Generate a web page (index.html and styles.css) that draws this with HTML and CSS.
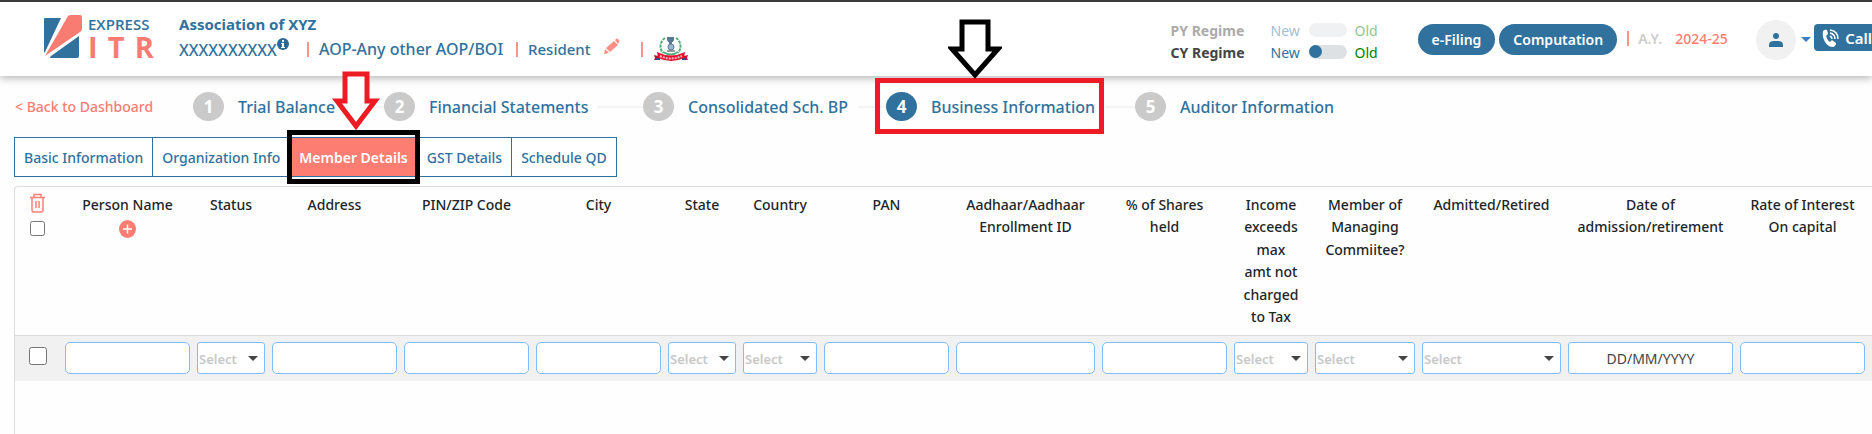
FILE: index.html
```html
<!DOCTYPE html>
<html lang="en">
<head>
  <meta charset="UTF-8" />
  <meta name="viewport" content="width=device-width, initial-scale=1.0" />
  <title>Express ITR | Member Details</title>
  <link rel="stylesheet" href="styles.css">
</head>
<body>
  <!-- Header -->
  <header class="header">
    <a href="#" class="logo">
      <svg width="39" height="44" viewBox="0 0 39 44">
        <path d="M2 3H18L2 37Q1 39 1 36V4Q1 3 2 3Z" fill="#31719d" />
        <path d="M25 1Q26 0 28 0H37Q39 0 39 2V14Q39 16 37 17L2 41Z" fill="#f97c72" />
        <path d="M36 21V41Q36 43 34 43H8Q6 43 8 41L36 21Z" fill="#31719d" />
      </svg>
      <div class="logo-text">
        <span class="logo-top">EXPRESS</span>
        <span class="logo-bottom"><span>I</span><span>T</span><span>R</span></span>
      </div>
    </a>
    <div class="client">
      <div class="client-name">Association of XYZ</div>
      <div class="client-info">
        <span class="client-pan">XXXXXXXXXX<svg class="info-icon" width="12" height="12" viewBox="0 0 12 12"><circle cx="6" cy="6" r="6" fill="#2a6a97" /><path d="M5 2h2v2H5zM4 5h3v4h1v1H4V9h1V6H4z" fill="#fff" /></svg></span>
        <span class="bar"></span>
        <span class="client-type">AOP-Any other AOP/BOI</span>
        <span class="bar"></span>
        <span class="client-status">Resident</span>
        <a href="#" class="edit" aria-label="Edit">
          <svg width="16" height="16" viewBox="0 0 16 16" fill="#fc8f83"><path d="M0 16l1-5 4 4zM2 10L10 3l4 4-8 7zM11 2l1-1q1-1 2 0l1 1q1 1 0 2l-1 2z" /></svg>
        </a>
        <span class="bar"></span>
        <svg class="emblem" width="34" height="26" viewBox="0 0 34 26">
          <path d="M11 2A10 10 0 0 0 9 17M22 2A10 10 0 0 1 24 17" fill="none" stroke="#4fae78" stroke-width="2" stroke-dasharray="3 1" />
          <path d="M9 16Q17 21 24 16" fill="none" stroke="#4fae78" stroke-width="2" />
          <path d="M13 1h7v3l-1 2h-5l-1-2zM15 6h3v2h-3z" fill="#5c7896" />
          <circle cx="17" cy="11" r="3" fill="#9db4ce" stroke="#5c7896" />
          <path d="M13 15h8" stroke="#333" />
          <path d="M0 19l4 1v4H0l1-2zM34 19l-4 1v4h4l-1-2z" fill="#c3122f" />
          <path d="M2 22h4v2H2zM28 22h4v2h-4z" fill="#274f8c" />
          <path d="M3 16Q17 23 31 16L30 22Q17 28 4 22Z" fill="#e3102f" />
          <path d="M6 20Q17 25 28 20" fill="none" stroke="#fff" stroke-width="2" stroke-dasharray="2 1" opacity=".7" />
        </svg>
      </div>
    </div>

    <div class="header-right">
      <div class="regimes">
        <div class="regime regime-off">
          <span class="regime-name">PY Regime</span>
          <span class="new">New</span>
          <input type="checkbox" class="toggle" aria-label="PY Regime" disabled />
          <span class="old">Old</span>
        </div>
        <div class="regime">
          <span class="regime-name">CY Regime</span>
          <span class="new">New</span>
          <input type="checkbox" class="toggle" aria-label="CY Regime" />
          <span class="old">Old</span>
        </div>
      </div>
      <div class="actions">
        <button type="button" class="pill">e-Filing</button>
        <button type="button" class="pill">Computation</button>
      </div>
      <div class="year">
        <span class="bar"></span>
        <span class="year-label">A.Y.</span>
        <span class="year-value">2024-25</span>
      </div>
      <button type="button" class="user" aria-label="Account">
        <span class="avatar">
          <svg width="14" height="14" viewBox="0 0 14 14" fill="#31719d"><circle cx="7" cy="3" r="3" /><path d="M0 14v-2q0-4 5-4h4q5 0 5 4v2z" /></svg>
        </span>
        <span class="user-caret"></span>
      </button>
      <button type="button" class="call">
        <svg width="17" height="18" viewBox="0 0 17 18">
          <path d="M1 2Q3 0 5 1L6 5 4 7Q5 11 8 13L10 11 14 14Q14 17 11 18 6 18 3 13 0 8 1 2Z" fill="#fff" />
          <path d="M8 7Q10 8 10 10M8 4Q13 5 13 10M8 1Q16 2 16 10" fill="none" stroke="#fff" stroke-width="1.5" />
        </svg>
        Call
      </button>
    </div>
  </header>

  <!-- Steps -->
  <nav class="steps-row">
    <a href="#" class="back">&lt; Back to Dashboard</a>
    <div class="steps">
      <a href="#" class="step"><span class="num">1</span>Trial Balance<span class="line"></span></a>
      <a href="#" class="step"><span class="num">2</span>Financial Statements<span class="line"></span></a>
      <a href="#" class="step"><span class="num">3</span>Consolidated Sch. BP<span class="line"></span></a>
      <a href="#" class="step active"><span class="num">4</span>Business Information<span class="line"></span>
        <span class="mark mark-step"></span>
        <svg class="arrow arrow-step" width="54" height="60" viewBox="0 0 54 60"><path d="M14 3H40V30H50L27 56 4 30H14Z" fill="#fff" stroke="#000" stroke-width="5" /></svg>
      </a>
      <a href="#" class="step"><span class="num">5</span>Auditor Information</a>
    </div>
  </nav>

  <!-- Tabs -->
  <div class="tabs">
    <button type="button" class="tab">Basic Information</button>
    <button type="button" class="tab">Organization Info</button>
    <button type="button" class="tab selected">Member Details
      <span class="mark mark-tab"></span>
      <svg class="arrow arrow-tab" width="48" height="60" viewBox="0 0 48 60"><path d="M13 3H35V30H43L24 55 5 30H13Z" fill="#fff" stroke="#ed1c24" stroke-width="5" /></svg>
    </button>
    <button type="button" class="tab">GST Details</button>
    <button type="button" class="tab">Schedule QD</button>
  </div>

  <!-- Members -->
  <main class="panel">
    <table class="members">
      <colgroup>
        <col class="c-check"><col class="c-text"><col class="c-small"><col class="c-text"><col class="c-text"><col class="c-text"><col class="c-small"><col class="c-select"><col class="c-text"><col class="c-wide"><col class="c-text"><col class="c-select"><col class="c-member"><col class="c-wide"><col class="c-date"><col>
      </colgroup>
      <thead>
        <tr>
          <th class="check">
            <button type="button" class="icon-btn" aria-label="Delete">
              <svg width="15" height="20" viewBox="0 0 15 20" fill="none" stroke="#fc8074" stroke-width="1.5"><path d="M0 4.500H15M4 4V1.500H11V4M2 5V17Q2 19 4 19H11Q13 19 13 17V5M6 8V15M9 8V15" /></svg>
            </button>
            <input type="checkbox" class="check-all" aria-label="Select all" />
          </th>
          <th>Person Name
            <button type="button" class="icon-btn add" aria-label="Add person">
              <svg width="17" height="18" viewBox="0 0 17 18"><ellipse cx="8.500" cy="9" rx="8.500" ry="9" fill="#fd7d72" /><path d="M4 9H13M8.500 4.500V13.500" stroke="#fff" stroke-width="1.500" /></svg>
            </button>
          </th>
          <th>Status</th>
          <th>Address</th>
          <th>PIN/ZIP Code</th>
          <th>City</th>
          <th>State</th>
          <th>Country</th>
          <th>PAN</th>
          <th>Aadhaar/Aadhaar Enrollment ID</th>
          <th>% of Shares<br>held</th>
          <th>Income exceeds<br>max<br>amt not charged<br>to Tax</th>
          <th>Member of Managing Commiitee?</th>
          <th>Admitted/Retired</th>
          <th>Date of admission/retirement</th>
          <th>Rate of Interest<br>On capital</th>
        </tr>
      </thead>
      <tbody>
        <tr>
          <td class="check"><input type="checkbox" class="check-row" aria-label="Select row" /></td>
          <td><input type="text" class="field" aria-label="Person Name" /></td>
          <td><div class="select"><select aria-label="Status"><option>Select</option></select></div></td>
          <td><input type="text" class="field" aria-label="Address" /></td>
          <td><input type="text" class="field" aria-label="PIN/ZIP Code" /></td>
          <td><input type="text" class="field" aria-label="City" /></td>
          <td><div class="select"><select aria-label="State"><option>Select</option></select></div></td>
          <td><div class="select"><select aria-label="Country"><option>Select</option></select></div></td>
          <td><input type="text" class="field" aria-label="PAN" /></td>
          <td><input type="text" class="field" aria-label="Aadhaar" /></td>
          <td><input type="text" class="field" aria-label="% of Shares held" /></td>
          <td><div class="select"><select aria-label="Income exceeds max amt not charged to Tax"><option>Select</option></select></div></td>
          <td><div class="select"><select aria-label="Member of Managing Commiitee?"><option>Select</option></select></div></td>
          <td><div class="select"><select aria-label="Admitted/Retired"><option>Select</option></select></div></td>
          <td><input type="text" class="field date" placeholder="DD/MM/YYYY" aria-label="Date of admission/retirement" /></td>
          <td><input type="text" class="field" aria-label="Rate of Interest On capital" /></td>
        </tr>
      </tbody>
    </table>
  </main>
</body>
</html>
```

FILE: styles.css
```css
* {
  margin: 0;
  padding: 0;
  box-sizing: border-box;
}

body {
  font-family: 'Noto Sans', 'Open Sans', sans-serif;
  font-size: 14px;
  font-weight: 500;
  color: #212529;
  background: #fefefe;
  min-height: 100vh;
  display: flex;
  flex-direction: column;
  overflow-x: hidden;
}

a {
  color: #31719d;
  text-decoration: none;
}

button,
input,
select {
  font: inherit;
}

button {
  border: none;
  background: none;
  cursor: pointer;
}

/* Header */
.header {
  display: flex;
  height: 76px;
  padding-left: 43px;
  background: #fff;
  border-top: 2px solid #3c3c3c;
  box-shadow: 0 2px 8px rgba(0, 0, 0, 0.3);
  white-space: nowrap;
}

.logo {
  display: flex;
  gap: 6px;
  width: 136px;
  padding-top: 13px;
}

.logo-text {
  display: flex;
  flex-direction: column;
  width: 66px;
}

.logo-top {
  font-family: 'Open Sans', sans-serif;
  font-size: 15px;
  font-weight: 600;
  line-height: 18px;
}

.logo-bottom {
  display: flex;
  justify-content: space-between;
  font-family: 'Open Sans', sans-serif;
  font-size: 29px;
  font-weight: 700;
  line-height: 28px;
  color: #f97c72;
}

.client {
  padding-top: 11px;
  color: #31719d;
  font-size: 15px;
}

.client-name {
  font-weight: 700;
  line-height: 22px;
}

.client-info {
  display: flex;
  align-items: center;
  height: 28px;
}

.client-pan {
  width: 128px;
  font-size: 16px;
}

.info-icon {
  vertical-align: 6px;
}

.bar {
  width: 2px;
  height: 15px;
  background: #fd9488;
}

.client-type {
  width: 207px;
  padding-left: 10px;
  font-size: 16px;
}

.client-status {
  width: 86px;
  padding-left: 10px;
}

.edit {
  width: 37px;
  height: 22px;
}

.emblem {
  margin-left: 11px;
}

.header-right {
  display: flex;
  margin-left: auto;
}

.regimes {
  width: 247px;
  padding-top: 17px;
}

.regime {
  display: grid;
  grid-template-columns: 100px 38px 46px 1fr;
  align-items: center;
  height: 22px;
  font-weight: 400;
}

.regime-off {
  opacity: 0.45;
}

.regime-name {
  font-weight: 700;
  color: #444;
}

.new {
  color: #31719d;
}

.old {
  color: #008000;
}

.toggle {
  appearance: none;
  width: 38px;
  height: 14px;
  border-radius: 7px;
  background: #dee1e3;
}

.toggle::before {
  content: '';
  display: block;
  width: 13px;
  height: 13px;
  border-radius: 50%;
  background: #31719d;
}

.regime-off .toggle::before {
  display: none;
}

.actions {
  display: flex;
  gap: 4px;
  padding-top: 22px;
}

.pill {
  height: 31px;
  padding: 0 14px;
  border-radius: 16px;
  background: #31719d;
  color: #fff;
  font-weight: 600;
}

.year {
  display: flex;
  align-items: center;
  width: 139px;
  height: 72px;
  padding-left: 10px;
}

.year-label {
  width: 37px;
  padding-left: 9px;
  color: #ccc;
  font-weight: 600;
}

.year-value {
  padding-left: 9px;
  color: #fd7d72;
}

.user {
  display: flex;
  align-items: center;
  gap: 5px;
  width: 58px;
  height: 75px;
}

.avatar {
  display: flex;
  align-items: center;
  justify-content: center;
  width: 40px;
  height: 40px;
  border-radius: 50%;
  background: #f1f1f1;
}

.user-caret {
  border: 5px solid transparent;
  border-top-color: #3b7cc4;
  border-bottom: none;
}

.call {
  display: flex;
  align-items: center;
  gap: 6px;
  height: 27px;
  margin-top: 22px;
  padding-left: 8px;
  border-radius: 4px 0 0 4px;
  background: #31719d;
  color: #fff;
  font-size: 15px;
  font-weight: 600;
}

/* Steps */
.steps-row {
  display: flex;
  align-items: center;
  height: 61px;
  padding-left: 15px;
  white-space: nowrap;
}

.back {
  width: 178px;
  color: #fd7d72;
}

.steps {
  flex: 1;
  display: grid;
  grid-template-columns: 191px 259px 243px 249px 1fr;
}

.step {
  position: relative;
  display: flex;
  align-items: center;
  font-size: 16px;
  font-weight: 500;
}

.num {
  display: flex;
  align-items: center;
  justify-content: center;
  width: 31px;
  height: 29px;
  margin-right: 14px;
  border-radius: 50%;
  background: #cacaca;
  color: #fff;
  font-size: 17px;
  font-weight: 700;
}

.active .num {
  background: #31719d;
}

.line {
  flex: 1;
  height: 2px;
  margin-left: 10px;
  background: #f4f4f4;
}

/* Highlight frames and arrows over the active step and tab */
.mark {
  position: absolute;
  border: 5px solid #000;
}

.mark-step {
  top: -14px;
  bottom: -13px;
  left: -11px;
  width: 229px;
  border-color: #ed1c24;
}

.mark-tab {
  inset: -8px -3px;
}

.arrow {
  position: absolute;
  z-index: 1;
}

.arrow-step {
  top: -73px;
  left: 62px;
}

.arrow-tab {
  bottom: 45px;
  left: 42px;
}

/* Tabs */
.tabs {
  display: flex;
  padding-left: 14px;
}

.tab {
  position: relative;
  height: 40px;
  margin-right: -1px;
  padding: 0 9px;
  border: 1px solid #31719d;
  background: #fff;
  color: #31719d;
  font-weight: 500;
}

.tab.selected {
  z-index: 1;
  background: #fd7d72;
  color: #fff;
  font-weight: 600;
}

/* Members */
.panel {
  flex: 1;
  margin: 9px 0 0 14px;
  border: 1px solid #dcdcdc;
  border-width: 1px 0 0 1px;
  border-radius: 4px 0 0 0;
}

.members {
  width: 100%;
  min-width: 1854px;
  table-layout: fixed;
  border-collapse: collapse;
}

.c-check { width: 47px; }
.c-text { width: 132px; }
.c-small { width: 75px; }
.c-select { width: 81px; }
.c-wide { width: 146px; }
.c-member { width: 107px; }
.c-date { width: 172px; }

.members th {
  height: 148px;
  padding: 7px 4px 0 3px;
  border-bottom: 1px solid #dcdcdc;
  font-weight: 500;
  line-height: 1.6;
  vertical-align: top;
}

.members td {
  height: 46px;
  padding: 0 4px 0 3px;
  background: #f1f1f1;
}

.members td:last-child,
.members th:last-child {
  padding-right: 7px;
}

.members .check {
  padding: 0 2px 6px 0;
  text-align: center;
}

.icon-btn {
  display: block;
  margin: 0 auto;
}

.icon-btn svg {
  display: block;
}

.members th.check {
  padding-top: 6px;
}

.add {
  margin-top: 4px;
}

.check-all {
  width: 15px;
  height: 15px;
  margin-top: 8px;
}

.check-row {
  width: 18px;
  height: 18px;
  vertical-align: middle;
}

.field,
.select select {
  display: block;
  width: 100%;
  height: 32px;
  border: 1px solid #80bdff;
  border-radius: 5px;
  background: #fff;
}

.date {
  border-radius: 3px;
  text-align: center;
  font-weight: 400;
}

.date::placeholder {
  color: #444;
}

.select {
  position: relative;
}

.select select {
  appearance: none;
  padding: 2px 0 0 1px;
  border-radius: 3px;
  color: #c8c8c8;
  font-size: 13px;
  font-weight: 600;
}

.select::after {
  content: '';
  position: absolute;
  top: 14px;
  right: 7px;
  border: 5px solid transparent;
  border-top-color: #444;
  border-bottom: none;
  pointer-events: none;
}
```
